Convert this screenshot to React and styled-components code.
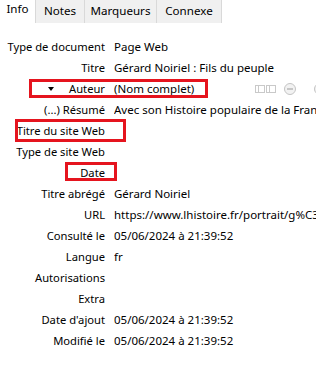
import React from 'react';
import styled, { createGlobalStyle } from 'styled-components';

const GlobalStyle = createGlobalStyle`
  html, body {
    margin: 0;
    padding: 0;
    background: #ffffff;
  }
  body {
    font-family: "Segoe UI", "Noto Sans", "Liberation Sans", sans-serif;
    font-size: 11.2px;
    color: #000000;
  }
`;

const Page = styled.div`
  position: relative;
  width: 316px;
  height: 366px;
  overflow: hidden;
  background: #ffffff;
`;

const TabBar = styled.div`
  display: flex;
  height: 23px;
`;

const Tab = styled.div`
  width: ${p => p.w}px;
  display: flex;
  align-items: center;
  justify-content: center;
  box-sizing: border-box;
  white-space: nowrap;
  font-size: 11.6px;
  background: ${p => (p.active ? '#ffffff' : '#f0f0f0')};
  border-right: 1px solid #d9d9d9;
  padding-bottom: ${p => (p.active ? '6px' : '3px')};
`;

const Fields = styled.div`
  display: grid;
  grid-template-columns: 105px 1fr;
  column-gap: 9px;
  grid-auto-rows: 21px;
  align-items: center;
  padding-top: 13px;
`;

const Label = styled.div`
  display: flex;
  align-items: center;
  justify-content: flex-end;
  white-space: nowrap;
`;

const Value = styled.div`
  display: flex;
  align-items: center;
  white-space: nowrap;
  overflow: hidden;
  font-size: 11.5px;
`;

const Grow = styled.span`
  flex: 1;
`;

const Caret = styled.span`
  margin-left: 48px;
  margin-right: auto;
  width: 0;
  height: 0;
  border-left: 3.5px solid transparent;
  border-right: 3.5px solid transparent;
  border-top: 4px solid #000;
`;

const Tools = styled.div`
  display: flex;
  align-items: center;
  gap: 8px;
  margin-right: -10px;
`;

const ToolGap = styled.span`
  width: 2px;
`;

const Mark = styled.div`
  position: absolute;
  box-sizing: border-box;
  border: 3px solid #e5141e;
  pointer-events: none;
`;

const SwitchIcon = () => (
  <svg width="21" height="8" viewBox="0 0 21 8">
    <rect x="0.5" y="0.5" width="9" height="7" fill="#fff" stroke="#c9c9c9" />
    <rect x="11.5" y="0.5" width="9" height="7" fill="#fff" stroke="#c9c9c9" />
    <line x1="3.5" y1="1" x2="3.5" y2="7" stroke="#c9c9c9" />
    <line x1="14.5" y1="1" x2="14.5" y2="7" stroke="#c9c9c9" />
  </svg>
);

const CircleIcon = ({ plus }) => (
  <svg width="12" height="12" viewBox="0 0 12 12">
    <circle cx="6" cy="6" r="5.5" fill="#f2f2f2" stroke="#c3c3c3" />
    <line x1="3" y1="6" x2="9" y2="6" stroke="#a8a8a8" strokeWidth="1.2" />
    {plus && <line x1="6" y1="3" x2="6" y2="9" stroke="#a8a8a8" strokeWidth="1.2" />}
  </svg>
);

const tabs = [
  { name: 'Info', w: 36, active: true },
  { name: 'Notes', w: 49 },
  { name: 'Marqueurs', w: 72 },
  { name: 'Connexe', w: 65 },
];

const fields = [
  ['Type de document', 'Page Web'],
  ['Titre', 'Gérard Noiriel : Fils du peuple'],
  ['Auteur', '(Nom complet)', 'creator'],
  ['(...) Résumé', 'Avec son Histoire populaire de la France, Gérard Noiriel'],
  ['Titre du site Web', ''],
  ['Type de site Web', ''],
  ['Date', ''],
  ['Titre abrégé', 'Gérard Noiriel'],
  ['URL', 'https://www.lhistoire.fr/portrait/g%C3%A9rard-noiriel-fils-du-peuple'],
  ['Consulté le', '05/06/2024 à 21:39:52'],
  ['Langue', 'fr'],
  ['Autorisations', ''],
  ['Extra', ''],
  ["Date d'ajout", '05/06/2024 à 21:39:52'],
  ['Modifié le', '05/06/2024 à 21:39:52'],
];

export default function App() {
  return (
    <>
      <GlobalStyle />
      <Page>
        <TabBar>
          {tabs.map(t => (
            <Tab key={t.name} w={t.w} active={t.active}>{t.name}</Tab>
          ))}
        </TabBar>
        <Fields>
          {fields.map(([label, value, kind]) => (
            <React.Fragment key={label}>
              <Label>
                {kind === 'creator' && <Caret />}
                {label}
              </Label>
              <Value>
                {value}
                {kind === 'creator' && (
                  <>
                    <Grow />
                    <Tools>
                      <SwitchIcon />
                      <CircleIcon />
                      <ToolGap />
                      <CircleIcon plus />
                    </Tools>
                  </>
                )}
              </Value>
            </React.Fragment>
          ))}
        </Fields>
        <Mark style={{ left: 29, top: 79, width: 179, height: 19 }} />
        <Mark style={{ left: 15, top: 119, width: 111, height: 23 }} />
        <Mark style={{ left: 65, top: 162, width: 52, height: 19 }} />
      </Page>
    </>
  );
}
